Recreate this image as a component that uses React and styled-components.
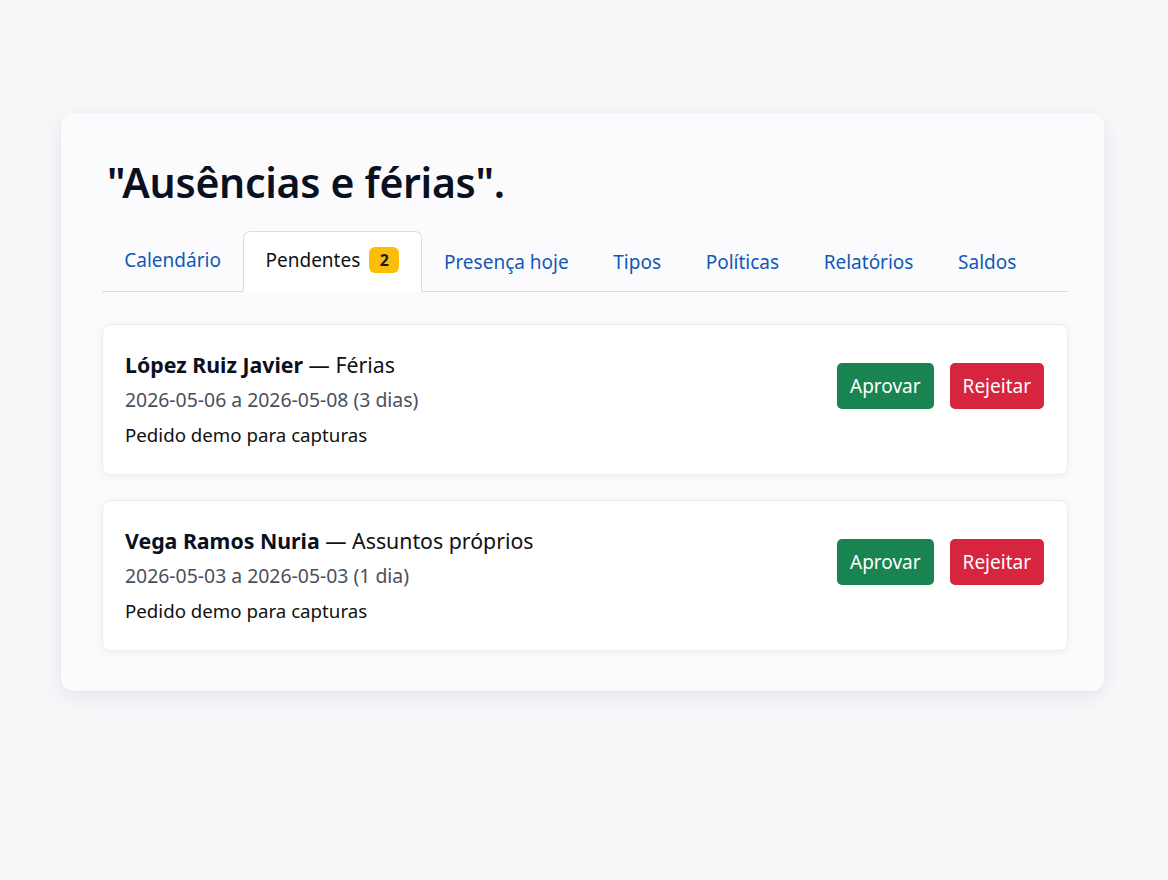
import React from "react";
import styled, { createGlobalStyle } from "styled-components";

const Global = createGlobalStyle`
  html, body { margin: 0; padding: 0; background: #f8f8fb; }
  body { font-family: "Noto Sans", "Open Sans", sans-serif; color: #111; }
  * { box-sizing: border-box; }
`;

const Page = styled.div`
  width: 1168px;
  height: 880px;
  padding: 113px 64px 0 61px;
`;

const Panel = styled.section`
  width: 1043px;
  height: 578px;
  background: #fbfbfd;
  border-radius: 12px;
  box-shadow: 0 6px 24px rgba(20, 20, 50, 0.08), 0 1px 3px rgba(20, 20, 50, 0.05);
  padding: 38px 36px 0 41px;
`;

const Title = styled.h1`
  margin: 0 0 17px 5px;
  font-size: 41px;
  font-weight: 600;
  line-height: 62px;
  color: #0b1020;
  letter-spacing: -0.3px;
`;

const Tabs = styled.nav`
  display: flex;
  align-items: flex-end;
  border-bottom: 1px solid #dcdde2;
  height: 62px;
  margin-bottom: 32px;
`;

const Tab = styled.div`
  display: flex;
  align-items: center;
  gap: 9px;
  height: 61px;
  padding: 0 21.3px;
  padding-top: ${(p) => (p.$up ? "0" : "4px")};
  padding-bottom: 4px;
  margin-bottom: -1px;
  font-size: 19px;
  color: ${(p) => (p.$active ? "#111" : "#1059b5")};
  background: ${(p) => (p.$active ? "#fff" : "transparent")};
  border: 1px solid ${(p) => (p.$active ? "#dcdde2" : "transparent")};
  border-bottom-color: ${(p) => (p.$active ? "#fff" : "transparent")};
  border-radius: 7px 7px 0 0;
`;

const Badge = styled.span`
  display: inline-flex;
  align-items: center;
  justify-content: center;
  background: #fbbd08;
  color: #1a1a1a;
  font-weight: 700;
  font-size: 16px;
  min-width: 30px;
  height: 26px;
  border-radius: 6px;
  padding: 0 8px;
`;

const List = styled.div`
  display: flex;
  flex-direction: column;
  gap: 25px;
`;

const Item = styled.article`
  display: flex;
  align-items: flex-start;
  justify-content: space-between;
  height: 151px;
  background: #fff;
  border: 1px solid #ececf1;
  border-radius: 8px;
  box-shadow: 0 2px 8px rgba(20, 20, 50, 0.05);
  padding: 22px 23px 0 22px;
`;

const Info = styled.div`
  display: flex;
  flex-direction: column;
`;

const Line = styled.div`
  font-size: ${(p) => p.$size || "18.7px"};
  line-height: 35px;
  color: ${(p) => p.$color || "#111"};
  white-space: nowrap;
`;

const Name = styled.strong`
  font-weight: 700;
  color: #0b1020;
`;

const Actions = styled.div`
  display: flex;
  gap: 16px;
  margin-top: 16px;
`;

const Button = styled.button`
  height: 46px;
  padding: 0 13px;
  border: none;
  border-radius: 5px;
  font-family: inherit;
  font-size: 19px;
  color: #fff;
  background: ${(p) => p.$bg};
  cursor: pointer;
`;

const requests = [
  {
    name: "López Ruiz Javier",
    type: "Férias",
    range: "2026-05-06 a 2026-05-08 (3 dias)",
    note: "Pedido demo para capturas",
  },
  {
    name: "Vega Ramos Nuria",
    type: "Assuntos próprios",
    range: "2026-05-03 a 2026-05-03 (1 dia)",
    note: "Pedido demo para capturas",
  },
];

export default function App() {
  return (
    <>
      <Global />
      <Page>
        <Panel>
          <Title>"Ausências e férias".</Title>
          <Tabs>
            <Tab $up>Calendário</Tab>
            <Tab $active $up>
              Pendentes <Badge>2</Badge>
            </Tab>
            <Tab>Presença hoje</Tab>
            <Tab>Tipos</Tab>
            <Tab>Políticas</Tab>
            <Tab>Relatórios</Tab>
            <Tab>Saldos</Tab>
          </Tabs>
          <List>
            {requests.map((r) => (
              <Item key={r.name}>
                <Info>
                  <Line $size="21.3px">
                    <Name>{r.name}</Name> — {r.type}
                  </Line>
                  <Line $size="19.4px" $color="#4a4f5a">{r.range}</Line>
                  <Line>{r.note}</Line>
                </Info>
                <Actions>
                  <Button $bg="#198452">Aprovar</Button>
                  <Button $bg="#d7243f">Rejeitar</Button>
                </Actions>
              </Item>
            ))}
          </List>
        </Panel>
      </Page>
    </>
  );
}
